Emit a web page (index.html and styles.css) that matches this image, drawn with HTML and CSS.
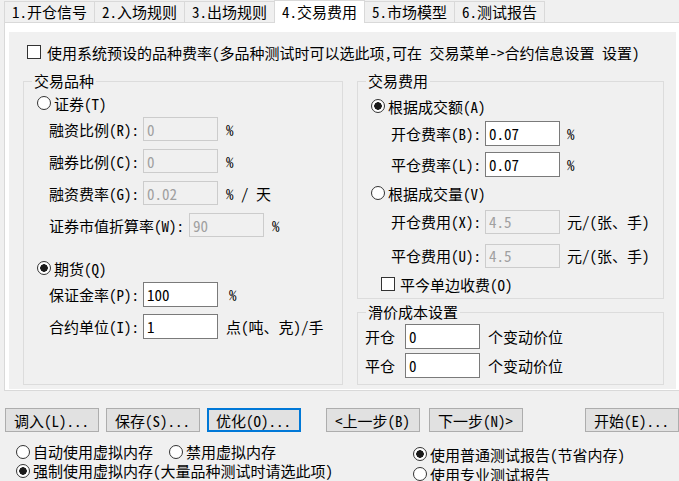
FILE: index.html
```html
<!DOCTYPE html>
<html lang="zh-CN">
<head>
    <meta charset="UTF-8">
    <title>交易费用</title>
    <link rel="stylesheet" href="styles.css">
</head>
<body>
    <div class="tabs">
        <div class="tab">1.开仓信号</div>
        <div class="tab">2.入场规则</div>
        <div class="tab">3.出场规则</div>
        <div class="tab active">4.交易费用</div>
        <div class="tab">5.市场模型</div>
        <div class="tab">6.测试报告</div>
    </div>

    <div class="panel">
        <div class="page">
            <div class="sys"><span class="box"></span>使用系统预设的品种费率(多品种测试时可以选此项,可在 交易菜单-&gt;合约信息设置 设置)</div>

            <div class="cols">
                <div class="group group-kind">
                    <div class="group-title">交易品种</div>
                    <div class="opt opt-first"><span class="dot"></span>证券(T)</div>
                    <div class="field"><span class="lbl">融资比例(R):</span><input value="0" disabled><span class="unit">%</span></div>
                    <div class="field"><span class="lbl">融券比例(C):</span><input value="0" disabled><span class="unit">%</span></div>
                    <div class="field"><span class="lbl">融资费率(G):</span><input value="0.02" disabled><span class="unit">% / 天</span></div>
                    <div class="field"><span class="lbl lbl-wide">证券市值折算率(W):</span><input value="90" disabled><span class="unit">%</span></div>
                    <div class="opt opt-futures"><span class="dot on"></span>期货(Q)</div>
                    <div class="field"><span class="lbl">保证金率(P):</span><input value="100"><span class="unit unit-pct">%</span></div>
                    <div class="field"><span class="lbl">合约单位(I):</span><input value="1"><span class="unit">点(吨、克)/手</span></div>
                </div>

                <div class="side">
                    <div class="group group-fee">
                        <div class="group-title">交易费用</div>
                        <div class="opt opt-amount"><span class="dot on"></span>根据成交额(A)</div>
                        <div class="field field-fee first"><span class="lbl">开仓费率(B):</span><input value="0.07"><span class="unit">%</span></div>
                        <div class="field field-fee"><span class="lbl">平仓费率(L):</span><input value="0.07"><span class="unit">%</span></div>
                        <div class="opt opt-volume"><span class="dot"></span>根据成交量(V)</div>
                        <div class="field field-fee spaced"><span class="lbl">开仓费用(X):</span><input value="4.5" disabled><span class="unit">元/(张、手)</span></div>
                        <div class="field field-fee spaced"><span class="lbl">平仓费用(U):</span><input value="4.5" disabled><span class="unit">元/(张、手)</span></div>
                        <div class="today"><span class="box"></span>平今单边收费(O)</div>
                    </div>

                    <div class="group group-slip">
                        <div class="group-title">滑价成本设置</div>
                        <div class="field field-slip first"><span class="lbl">开仓</span><input value="0"><span class="unit">个变动价位</span></div>
                        <div class="field field-slip"><span class="lbl">平仓</span><input value="0"><span class="unit">个变动价位</span></div>
                    </div>
                </div>
            </div>
        </div>
    </div>

    <div class="buttons">
        <div class="btn-group">
            <button class="btn">调入(L)...</button>
            <button class="btn">保存(S)...</button>
            <button class="btn btn-focus">优化(O)...</button>
        </div>
        <div class="btn-group nav">
            <button class="btn">&lt;上一步(B)</button>
            <button class="btn">下一步(N)&gt;</button>
        </div>
        <button class="btn btn-start">开始(E)...</button>
    </div>

    <div class="options">
        <div class="opts-left">
            <div class="opt-row"><span class="dot"></span>自动使用虚拟内存<span class="dot gap"></span>禁用虚拟内存</div>
            <div class="opt-row"><span class="dot on"></span>强制使用虚拟内存(大量品种测试时请选此项)</div>
        </div>
        <div class="opts-right">
            <div class="opt-row"><span class="dot on"></span>使用普通测试报告(节省内存)</div>
            <div class="opt-row"><span class="dot"></span>使用专业测试报告</div>
        </div>
    </div>
</body>
</html>
```

FILE: styles.css
```css
body {
    margin: 0;
    width: 679px;
    height: 481px;
    overflow: hidden;
    background-color: #f0f0f0;
    color: #000;
    font: 15px/1 "Noto Sans Mono CJK SC", "Noto Sans CJK SC", sans-serif;
}
.tabs {
    display: flex;
    align-items: flex-end;
    height: 22px;
    padding-left: 4px;
}
.tab {
    height: 21px;
    box-sizing: border-box;
    padding: 0 7px;
    margin-left: -1px;
    border: 1px solid #d9d9d9;
    border-bottom: none;
    line-height: 20px;
    white-space: nowrap;
}
.tab:first-child {
    margin-left: 0;
}
.tab.active {
    position: relative;
    height: 23px;
    margin-bottom: -1px;
    background-color: #fff;
    line-height: 21px;
}
.panel {
    margin-left: 4px;
    padding: 9px 3px 1px 4px;
    border: 1px solid #d9d9d9;
    border-right: none;
    background-color: #fff;
}
.page {
    height: 357px;
    box-sizing: border-box;
    padding: 12px 0 0 14px;
    background-color: #f0f0f0;
}
.sys {
    display: flex;
    align-items: center;
    height: 16px;
    margin-left: 4px;
    white-space: nowrap;
}
.box {
    flex: none;
    width: 14px;
    height: 14px;
    box-sizing: border-box;
    margin-right: 6px;
    border: 1px solid #333;
    background-color: #fff;
}
.dot {
    flex: none;
    width: 14px;
    height: 14px;
    box-sizing: border-box;
    margin-right: 3px;
    border: 1px solid #333;
    border-radius: 50%;
    background-color: #fff;
}
.dot.on {
    background: radial-gradient(circle, #1a1a1a 0 3.5px, #fff 4px);
}
.cols {
    display: flex;
    margin-top: 21px;
}
.group {
    box-sizing: border-box;
    border: 1px solid #dcdcdc;
}
.group-title {
    width: fit-content;
    height: 18px;
    margin: -10px 0 0 8px;
    padding: 0 2px;
    line-height: 18px;
    background-color: #f0f0f0;
}
.group-kind {
    width: 320px;
    height: 304px;
}
.side {
    width: 307px;
    margin-left: 14px;
}
.group-fee {
    height: 218px;
}
.group-slip {
    height: 73px;
    margin-top: 13px;
}
.opt {
    display: flex;
    align-items: center;
    height: 20px;
    padding-left: 13px;
}
.opt-first {
    margin-top: 3px;
}
.opt-futures {
    margin-top: 17px;
}
.opt-amount {
    margin-top: 6px;
}
.opt-volume {
    margin-top: 3px;
}
.field {
    display: flex;
    align-items: center;
    height: 32px;
    padding-left: 25px;
    white-space: nowrap;
}
.lbl {
    flex: none;
    width: 94px;
}
.lbl-wide {
    width: 140px;
}
.unit {
    margin-left: 8px;
}
.unit-pct {
    margin-left: 11px;
}
input {
    flex: none;
    width: 75px;
    height: 25px;
    box-sizing: border-box;
    margin: 0;
    padding: 0 3px;
    border: 1px solid #7a7a7a;
    background-color: #fff;
    color: #000;
    font: inherit;
}
input:disabled {
    height: 24px;
    border-color: #cccccc;
    background-color: #f0f0f0;
    color: #a0a0a0;
}
.field-fee {
    height: 31px;
    padding-left: 33px;
}
.field-fee.first {
    margin-top: 2px;
}
.field-fee.spaced {
    margin-top: 3px;
}
.field-fee .unit {
    margin-left: 7px;
}
.today {
    display: flex;
    align-items: center;
    height: 20px;
    margin-top: 3px;
    padding-left: 23px;
}
.today .box {
    margin-right: 5px;
}
.field-slip {
    height: 29px;
    padding-left: 7px;
}
.field-slip.first {
    margin-top: 1px;
}
.field-slip .lbl {
    width: 40px;
}
.buttons {
    display: flex;
    margin-top: 17px;
    padding-left: 5px;
}
.btn-group {
    display: flex;
    gap: 7px;
}
.btn-group.nav {
    gap: 9px;
    margin-left: 25px;
}
.btn {
    width: 94px;
    height: 24px;
    box-sizing: border-box;
    margin: 0;
    padding: 0 0 0 8px;
    border: 1px solid #adadad;
    background-color: #e1e1e1;
    color: #000;
    font: inherit;
    text-align: left;
    white-space: nowrap;
}
.btn-focus {
    padding-left: 7px;
    border: 2px solid #0078d7;
}
.btn-start {
    margin-left: auto;
}
.options {
    display: flex;
    margin-top: 10px;
}
.opts-left {
    width: 413px;
    box-sizing: border-box;
    padding-left: 16px;
}
.opts-right {
    padding-top: 2px;
}
.opts-right .opt-row {
    height: 20px;
}
.opt-row {
    display: flex;
    align-items: center;
    height: 19px;
    white-space: nowrap;
}
.dot.gap {
    margin-left: 16px;
}
```
